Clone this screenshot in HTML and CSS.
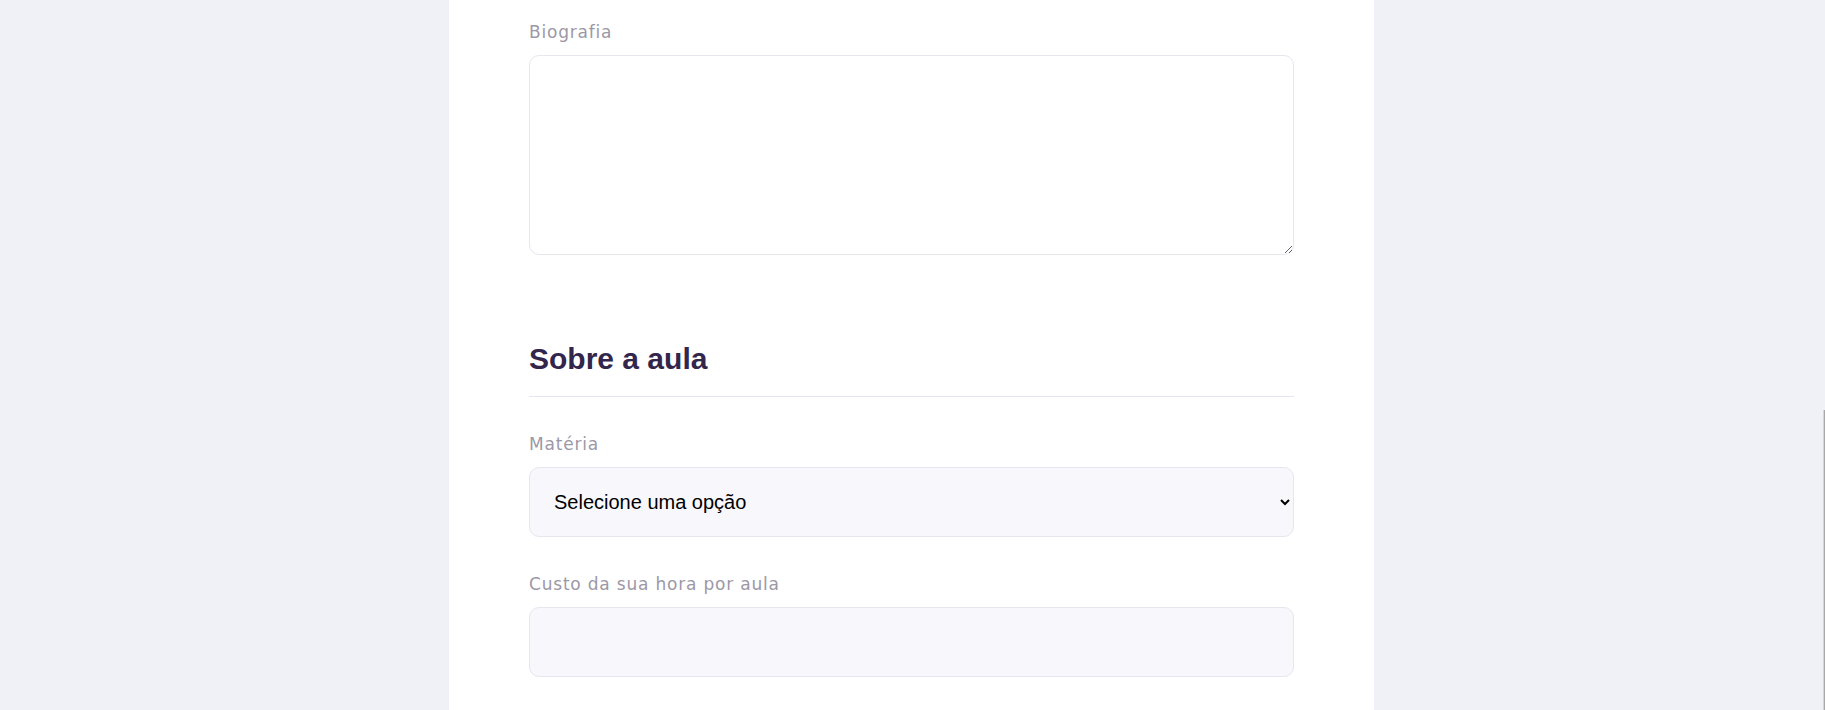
FILE: index.html
```html
<!DOCTYPE html>
<html lang="pt-BR">
<head>
<meta charset="utf-8">
<title>Proffy - Dar aulas</title>
<link rel="stylesheet" href="styles.css">
</head>
<body>
<div class="page">
  <main class="card">
    <fieldset class="group group-bio">
      <div class="field">
        <label class="label" for="bio">Biografia</label>
        <textarea class="textarea" id="bio"></textarea>
      </div>
    </fieldset>
    <fieldset class="group group-class">
      <legend class="legend">Sobre a aula</legend>
      <div class="field">
        <label class="label" for="subject">Matéria</label>
        <select class="select" id="subject">
          <option>Selecione uma opção</option>
          <option>Artes</option>
          <option>Biologia</option>
        </select>
      </div>
      <div class="field field-next">
        <label class="label" for="cost">Custo da sua hora por aula</label>
        <input class="input" id="cost" type="text">
      </div>
    </fieldset>
  </main>
</div>
<div class="edge-line"></div>
</body>
</html>
```
FILE: styles.css
```css
* {
  box-sizing: border-box;
}

html, body {
  margin: 0;
  padding: 0;
  height: 100%;
  overflow: hidden;
}

body {
  background: #F0F0F7;
  font-family: "DejaVu Sans", "Open Sans", sans-serif;
}

.page {
  display: flex;
  justify-content: center;
  padding-right: 2px;
  min-height: 100%;
}

.card {
  width: 925px;
  background: #FFFFFF;
  padding: 19px 80px 0;
  min-height: 710px;
}

.group {
  border: 0;
  margin: 0;
  padding: 0;
  min-width: 0;
}

.group-class {
  margin-top: 87px;
}

.legend {
  display: block;
  float: left;
  width: 100%;
  padding: 0 0 20px;
  margin: 0 0 34px;
  font-family: "Liberation Sans", Arial, sans-serif;
  font-weight: 700;
  font-size: 30px;
  line-height: 34px;
  color: #32264D;
  border-bottom: 1px solid #E6E6F0;
}

.field {
  display: flex;
  flex-direction: column;
  clear: both;
}

.field-next {
  margin-top: 34px;
}

.label {
  font-size: 17px;
  letter-spacing: 0.8px;
  line-height: 26px;
  color: #9C98A6;
  font-weight: 400;
}

.textarea,
.select,
.input {
  display: block;
  width: 100%;
  margin-top: 10px;
  border: 1px solid #E6E6F0;
  border-radius: 10px;
  outline: 0;
  font-family: "Liberation Sans", Arial, sans-serif;
  font-size: 20px;
  letter-spacing: 0;
  color: #000000;
}

.textarea {
  height: 200px;
  background: #FFFFFF;
  padding: 15px 20px;
  resize: vertical;
}

.select,
.input {
  height: 70px;
  background: #F8F8FC;
  padding: 0 20px;
}

.edge-line {
  position: fixed;
  right: 0;
  top: 410px;
  bottom: 0;
  width: 2px;
  border-left: 1px solid #D6D6D6;
  background: #A8A8A8;
}
```
